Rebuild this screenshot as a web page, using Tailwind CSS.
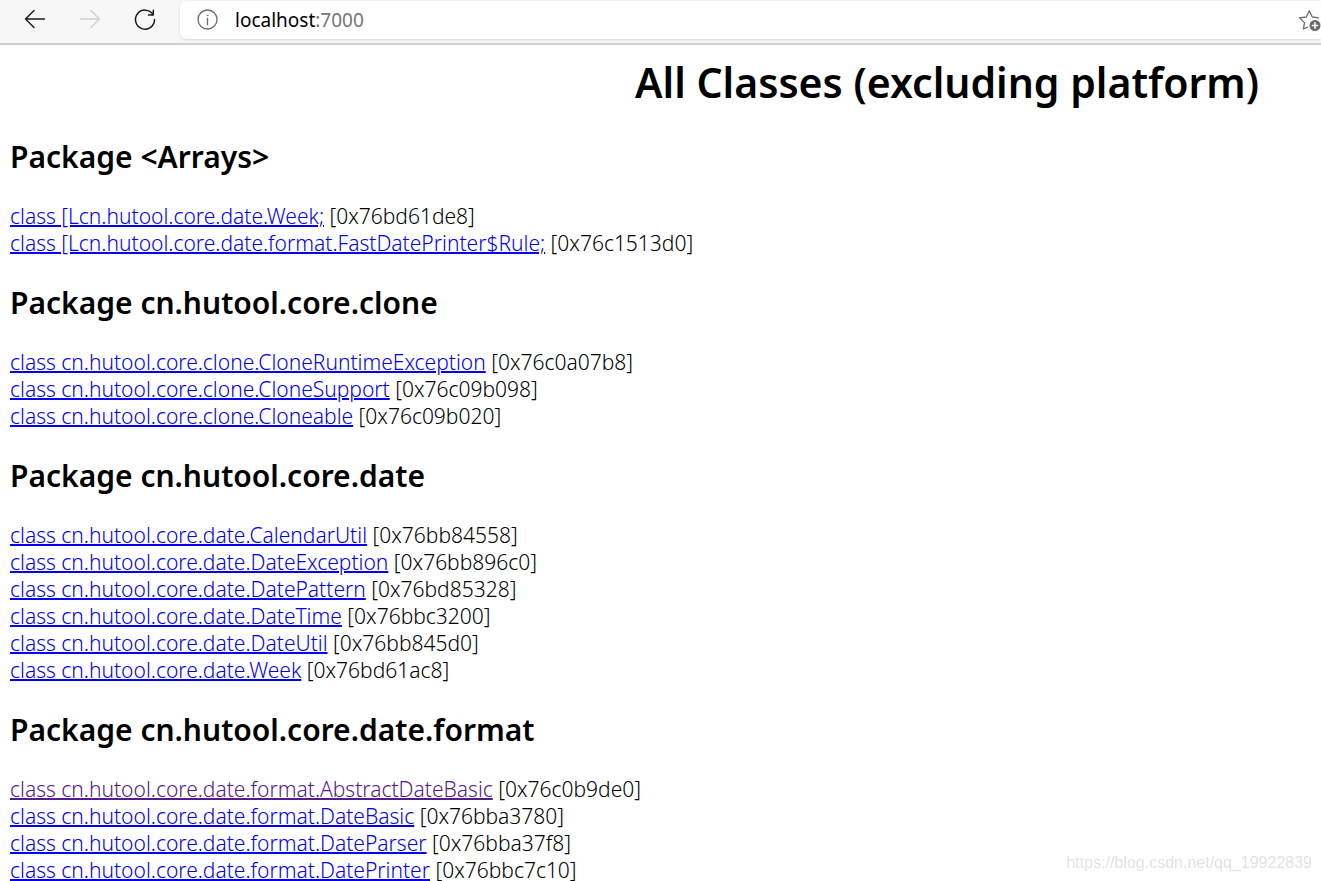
<!DOCTYPE html>
<html lang="en">
<head>
<meta charset="utf-8">
<title>All Classes (excluding platform)</title>
<script src="https://cdn.jsdelivr.net/npm/@tailwindcss/browser@4"></script>
</head>
<body class="min-h-screen overflow-x-hidden bg-white text-black font-['Noto_Sans',sans-serif]">
<header class="flex h-[45px] items-start border-b-2 border-[#cfcfcf] bg-[#f7f7f7]">
  <nav class="flex h-10 w-[180px] shrink-0 items-center gap-[31px] pl-[23px]">
    <button type="button" aria-label="Back" class="size-6"><svg viewBox="0 0 24 24" class="size-6" fill="none" stroke="#1a1a1a" stroke-width="1.4" stroke-linecap="round" stroke-linejoin="round"><path d="M21.500 11H2.500M11 2.500L2.500 11L11 19.500"/></svg></button>
    <button type="button" aria-label="Forward" disabled class="size-6"><svg viewBox="0 0 24 24" class="size-6" fill="none" stroke="#d2d2d2" stroke-width="1.400" stroke-linecap="round" stroke-linejoin="round"><path d="M2.500 11H21.500M13 2.500L21.500 11L13 19.500"/></svg></button>
    <button type="button" aria-label="Refresh" class="size-6"><svg viewBox="0 0 24 24" class="size-6" fill="none" stroke="#1a1a1a" stroke-width="1.500" stroke-linecap="round" stroke-linejoin="round"><path d="M20 6.500A9.500 9.500 0 1 0 21.500 11.500M20.300 2.200V7H15.500"/></svg></button>
  </nav>
  <div class="mt-px flex h-[38px] min-w-0 grow items-center rounded-l-md bg-white pl-4 shadow-sm">
    <svg viewBox="0 0 24 24" class="size-6 shrink-0" fill="none" stroke="#6b6b6b" stroke-width="1.300" stroke-linecap="round"><circle cx="11.500" cy="11.500" r="9.500"/><path d="M11.500 10.500V16.500"/><circle cx="11.500" cy="7.400" r=".5" fill="#6b6b6b" stroke-width=".6"/></svg>
    <div role="textbox" aria-label="Address" class="grow pl-[15px] text-[19px] leading-7">localhost<span class="text-[#767676]">:7000</span></div>
    <button type="button" aria-label="Add to favorites" class="size-6 shrink-0"><svg viewBox="0 0 24 24" class="size-6" fill="none" stroke="#6b6b6b" stroke-width="1.300" stroke-linejoin="round" stroke-linecap="round"><path d="M21.500 9.800L15.300 9L12.300 2.800L9.300 9L2.500 9.800L7.500 14.600L6.400 21L10.500 19.200"/><circle cx="18" cy="17.500" r="5.500" fill="#6b6b6b" stroke="none"/><path stroke="#fff" stroke-width="1.500" d="M18 14.800V20.200M15.300 17.500H20.700"/></svg></button>
  </div>
</header>
<main class="h-[calc(100vh-45px)] overflow-hidden px-[10px] text-[21px] leading-[27px] font-light [&_a]:text-[#0000ee] [&_a]:underline [&_a]:decoration-2 [&_a]:underline-offset-1 [&_h2]:mb-[26px] [&_h2]:text-[30px] [&_h2]:leading-10 [&_h2]:font-semibold [&_section]:mb-[26px]">
  <h1 class="mt-[9px] mb-[27px] pr-[52px] text-right text-[41px] leading-14 font-semibold whitespace-nowrap">All Classes (excluding platform)</h1>
  <section>
    <h2>Package &lt;Arrays&gt;</h2>
    <ul>
      <li><a href="#1">class [Lcn.hutool.core.date.Week;</a> [0x76bd61de8]</li>
      <li><a href="#2">class [Lcn.hutool.core.date.format.FastDatePrinter$Rule;</a> [0x76c1513d0]</li>
    </ul>
  </section>
  <section>
    <h2>Package cn.hutool.core.clone</h2>
    <ul>
      <li><a href="#3">class cn.hutool.core.clone.CloneRuntimeException</a> [0x76c0a07b8]</li>
      <li><a href="#4">class cn.hutool.core.clone.CloneSupport</a> [0x76c09b098]</li>
      <li><a href="#5">class cn.hutool.core.clone.Cloneable</a> [0x76c09b020]</li>
    </ul>
  </section>
  <section>
    <h2>Package cn.hutool.core.date</h2>
    <ul>
      <li><a href="#6">class cn.hutool.core.date.CalendarUtil</a> [0x76bb84558]</li>
      <li><a href="#7">class cn.hutool.core.date.DateException</a> [0x76bb896c0]</li>
      <li><a href="#8">class cn.hutool.core.date.DatePattern</a> [0x76bd85328]</li>
      <li><a href="#9">class cn.hutool.core.date.DateTime</a> [0x76bbc3200]</li>
      <li><a href="#10">class cn.hutool.core.date.DateUtil</a> [0x76bb845d0]</li>
      <li><a href="#11">class cn.hutool.core.date.Week</a> [0x76bd61ac8]</li>
    </ul>
  </section>
  <section>
    <h2>Package cn.hutool.core.date.format</h2>
    <ul>
      <li><a href="#12" class="text-[#551a8b]!">class cn.hutool.core.date.format.AbstractDateBasic</a> [0x76c0b9de0]</li>
      <li><a href="#13">class cn.hutool.core.date.format.DateBasic</a> [0x76bba3780]</li>
      <li><a href="#14">class cn.hutool.core.date.format.DateParser</a> [0x76bba37f8]</li>
      <li><a href="#15">class cn.hutool.core.date.format.DatePrinter</a> [0x76bbc7c10]</li>
    </ul>
  </section>
</main>
<div class="fixed right-[9px] bottom-2 font-['Liberation_Sans',sans-serif] text-[16px] leading-5 text-[#e2e2e2]">https://blog.csdn.net/qq_19922839</div>
</body>
</html>
